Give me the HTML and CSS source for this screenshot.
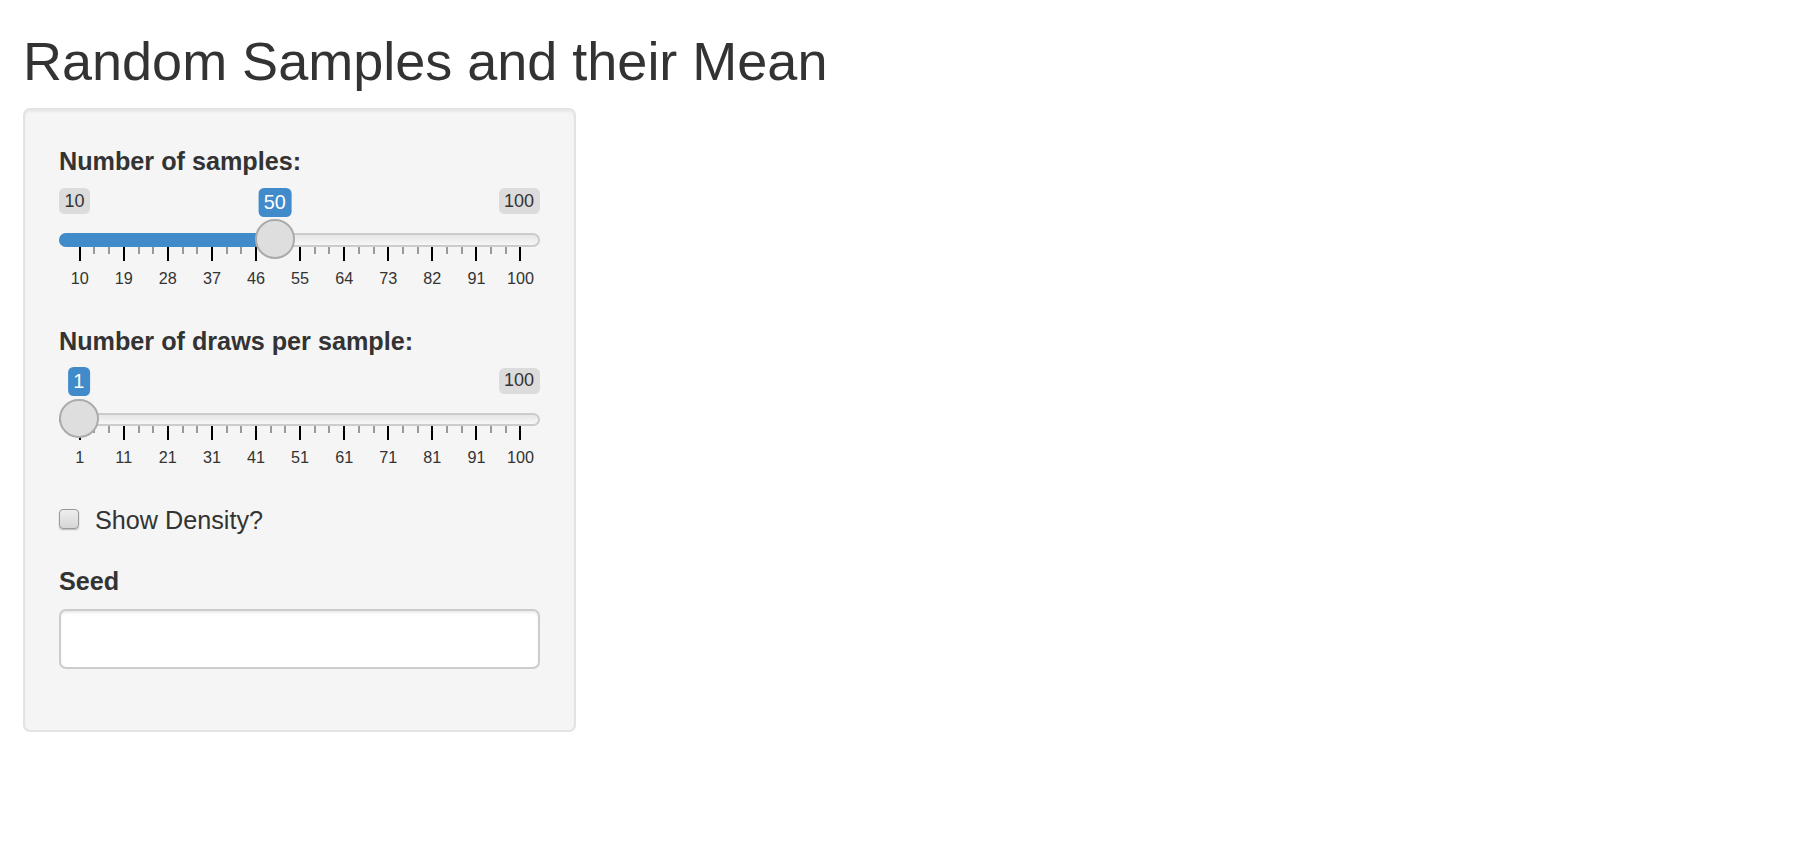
FILE: index.html
```html
<!DOCTYPE html>
<html lang="en">
<head>
<meta charset="utf-8">
<title>Random Samples and their Mean</title>
<link rel="stylesheet" href="styles.css">
</head>
<body>
<div class="container">
  <h2 class="title">Random Samples and their Mean</h2>
  <div class="well">
    <div class="form-group">
      <label class="control-label">Number of samples:</label>
      <div class="irs">
        <div class="irs-labels">
          <span class="irs-min">10</span>
          <span class="irs-max">100</span>
        </div>
        <span class="irs-single" style="left: 215.8px">50</span>
        <div class="irs-line"><span class="irs-bar" style="width: 215.8px"></span></div>
        <span class="irs-handle" style="left: 196px"></span>
        <div class="irs-ticks">
          <span class="pol big"></span><span class="pol"></span><span class="pol"></span>
          <span class="pol big"></span><span class="pol"></span><span class="pol"></span>
          <span class="pol big"></span><span class="pol"></span><span class="pol"></span>
          <span class="pol big"></span><span class="pol"></span><span class="pol"></span>
          <span class="pol big"></span><span class="pol"></span><span class="pol"></span>
          <span class="pol big"></span><span class="pol"></span><span class="pol"></span>
          <span class="pol big"></span><span class="pol"></span><span class="pol"></span>
          <span class="pol big"></span><span class="pol"></span><span class="pol"></span>
          <span class="pol big"></span><span class="pol"></span><span class="pol"></span>
          <span class="pol big"></span><span class="pol"></span><span class="pol"></span>
          <span class="pol big"></span>
        </div>
        <div class="irs-grid-text">
          <span>10</span><span>19</span><span>28</span><span>37</span><span>46</span><span>55</span><span>64</span><span>73</span><span>82</span><span>91</span><span>100</span>
        </div>
      </div>
    </div>

    <div class="form-group">
      <label class="control-label">Number of draws per sample:</label>
      <div class="irs">
        <div class="irs-labels">
          <span class="irs-min hidden">1</span>
          <span class="irs-max">100</span>
        </div>
        <span class="irs-single" style="left: 19.8px">1</span>
        <div class="irs-line"><span class="irs-bar" style="width: 19.8px"></span></div>
        <span class="irs-handle" style="left: 0px"></span>
        <div class="irs-ticks">
          <span class="pol big"></span><span class="pol"></span><span class="pol"></span>
          <span class="pol big"></span><span class="pol"></span><span class="pol"></span>
          <span class="pol big"></span><span class="pol"></span><span class="pol"></span>
          <span class="pol big"></span><span class="pol"></span><span class="pol"></span>
          <span class="pol big"></span><span class="pol"></span><span class="pol"></span>
          <span class="pol big"></span><span class="pol"></span><span class="pol"></span>
          <span class="pol big"></span><span class="pol"></span><span class="pol"></span>
          <span class="pol big"></span><span class="pol"></span><span class="pol"></span>
          <span class="pol big"></span><span class="pol"></span><span class="pol"></span>
          <span class="pol big"></span><span class="pol"></span><span class="pol"></span>
          <span class="pol big"></span>
        </div>
        <div class="irs-grid-text">
          <span>1</span><span>11</span><span>21</span><span>31</span><span>41</span><span>51</span><span>61</span><span>71</span><span>81</span><span>91</span><span>100</span>
        </div>
      </div>
    </div>

    <div class="checkbox">
      <label class="check-label"><input type="checkbox" class="check-box"><span>Show Density?</span></label>
    </div>

    <div class="form-group seed-group">
      <label class="control-label" for="seed">Seed</label>
      <input id="seed" type="text" class="form-control">
    </div>
  </div>
</div>
</body>
</html>
```

FILE: styles.css
```css
html, body {
  margin: 0;
  padding: 0;
  background: #ffffff;
}

body {
  font-family: "Liberation Sans", Arial, Helvetica, sans-serif;
  color: #333333;
}

.container {
  padding: 0 23px;
}

.title {
  margin: 31.6px 0 17.3px 0;
  font-size: 54px;
  line-height: 59.4px;
  font-weight: normal;
  color: #333333;
}

.well {
  box-sizing: border-box;
  width: 553px;
  padding: 34px 34.5px 34px 34px;
  background: #f5f5f5;
  border: 2px solid #e3e3e3;
  border-radius: 7px;
  box-shadow: inset 0 2px 2px rgba(0, 0, 0, 0.05);
  display: flex;
  flex-direction: column;
}

.form-group {
  display: flex;
  flex-direction: column;
  margin-bottom: 27px;
}

.control-label {
  display: block;
  font-size: 25.2px;
  line-height: 34px;
  font-weight: bold;
  margin-bottom: 10px;
}

/* slider */
.irs {
  position: relative;
  height: 108.3px;
}

.irs-labels {
  display: flex;
  justify-content: space-between;
  align-items: flex-start;
  height: 29.2px;
}

.irs-min, .irs-max {
  font-size: 18px;
  line-height: 22.4px;
  padding: 1.8px 5.4px;
  background: rgba(0, 0, 0, 0.1);
  color: #333333;
  border-radius: 5.4px;
}

.irs-min.hidden {
  visibility: hidden;
}

.irs-single {
  position: absolute;
  top: -0.5px;
  transform: translateX(-50%);
  font-size: 19.8px;
  line-height: 25.6px;
  padding: 1.8px 5.4px;
  background: #428bca;
  color: #ffffff;
  border-radius: 5.4px;
  white-space: nowrap;
}

.irs-line {
  position: relative;
  box-sizing: border-box;
  margin-top: 15.8px;
  height: 13.4px;
  border: 2px solid #cccccc;
  border-radius: 8px;
  background: linear-gradient(to bottom, #dedede -50%, #ffffff 150%);
}

.irs-bar {
  position: absolute;
  top: -2px;
  left: -2px;
  bottom: -2px;
  background: #428bca;
  border-radius: 8px 0 0 8px;
}

.irs-handle {
  position: absolute;
  top: 31px;
  box-sizing: border-box;
  width: 39.6px;
  height: 39.6px;
  background: #dedede;
  border: 2px solid #ababab;
  border-radius: 50%;
  z-index: 2;
}

.irs-ticks {
  display: flex;
  justify-content: space-between;
  align-items: flex-start;
  margin: 0 18px 0 19.8px;
  height: 14.4px;
}

.pol {
  display: block;
  width: 2px;
  height: 7px;
  background: #999999;
}

.pol.big {
  height: 14.4px;
  background: #000000;
}

.irs-grid-text {
  display: flex;
  justify-content: space-between;
  margin: 9px 19px 0 20.7px;
  font-size: 16.2px;
  line-height: 16.2px;
  color: #333333;
}

.irs-grid-text span {
  display: flex;
  justify-content: center;
  width: 0;
  white-space: nowrap;
}

/* checkbox */
.checkbox {
  margin-top: -1.3px;
  margin-bottom: 26.4px;
}

.check-label {
  display: flex;
  align-items: flex-start;
  font-size: 25.2px;
  line-height: 36px;
  font-weight: normal;
  color: #333333;
}

.check-box {
  appearance: none;
  -webkit-appearance: none;
  box-sizing: border-box;
  flex: none;
  width: 19.6px;
  height: 19.6px;
  margin: 7.4px 16.4px 0 0;
  border: 1px solid #9a9a9a;
  border-radius: 4px;
  background: linear-gradient(to bottom, #eeeeee, #d6d6d6);
  box-shadow: 0 1px 1.5px rgba(0, 0, 0, 0.25);
}

/* seed */
.seed-group .control-label {
  margin-bottom: 11px;
}

.form-control {
  box-sizing: border-box;
  width: 100%;
  height: 60px;
  margin: 0;
  padding: 10px 21px;
  font-family: inherit;
  font-size: 25.2px;
  color: #555555;
  background: #ffffff;
  border: 2px solid #cccccc;
  border-radius: 7px;
  box-shadow: inset 0 2px 2px rgba(0, 0, 0, 0.075);
  outline: none;
}
```
